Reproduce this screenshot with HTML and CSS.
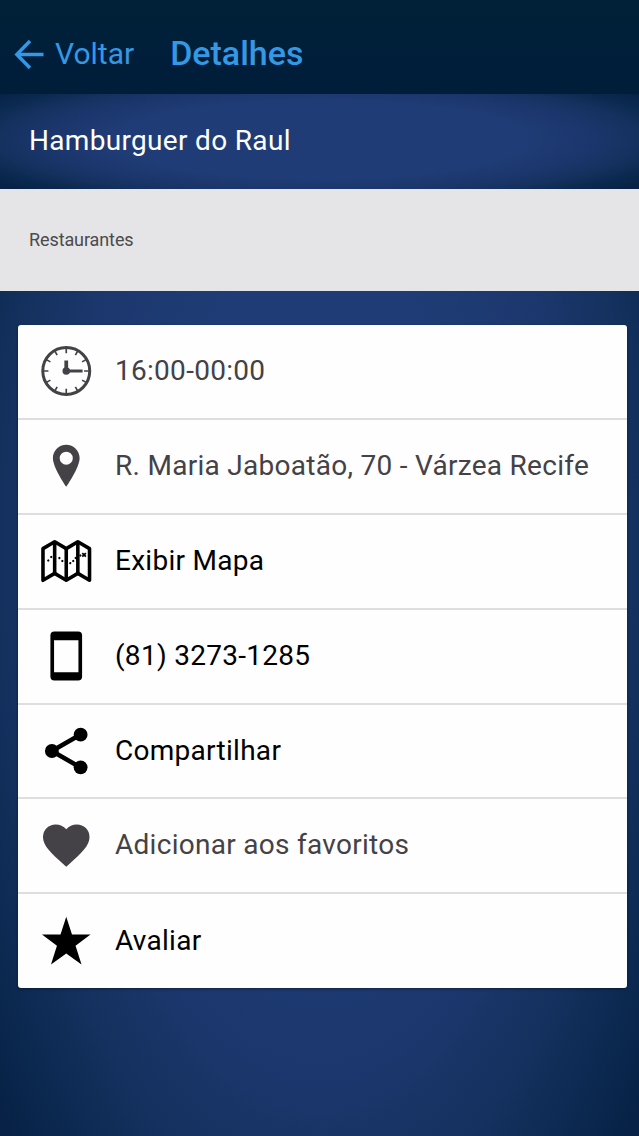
FILE: index.html
```html
<!DOCTYPE html>
<html lang="pt-BR">
<head>
    <meta charset="UTF-8">
    <meta name="viewport" content="width=device-width, initial-scale=1.0">
    <title>Detalhes</title>
    <link rel="stylesheet" href="styles.css">
</head>
<body>

<header class="navbar">
    <a class="back">
        <svg class="back-icon" viewBox="0 0 30 30"><path d="M29.500 15.500H3M16 2L2.800 15.500l13.200 13.500" fill="none" stroke="currentColor" stroke-width="3.4"/></svg>
        <span>Voltar</span>
    </a>
    <h1 class="title">Detalhes</h1>
</header>

<div class="place-name">Hamburguer do Raul</div>
<div class="category">Restaurantes</div>

<main class="content">
    <ul class="list">
        <li class="item muted">
            <svg class="icon" viewBox="0 0 52 52">
                <circle cx="26" cy="26" r="23.7" fill="none" stroke="currentColor" stroke-width="3"/>
                <path d="M26 3v5M26 44v5M3 26h5M44 26h5M14.5 6l2.3 4M35.2 42l2.3 4M6 14.5l4 2.3M42 35.2l4 2.3M37.5 6l-2.3 4M16.8 42l-2.3 4M46 14.5l-4 2.3M10 35.2l-4 2.3" stroke="currentColor" stroke-width="1.7"/>
                <path d="M26 15.500V26" stroke="currentColor" stroke-width="3.800"/>
                <path d="M26 26h16.500" stroke="currentColor" stroke-width="3.200"/>
                <circle cx="26" cy="26" r="3.800" fill="currentColor"/>
            </svg>
            <span>16:00-00:00</span>
        </li>
        <li class="item muted">
            <svg class="icon" viewBox="0 0 52 52">
                <path fill="currentColor" fill-rule="evenodd" d="M26 4.500C18.500 4.500 12.500 10.500 12.500 18c0 10 13.500 29 13.500 29s13.500-19 13.500-29c0-7.500-6-13.500-13.500-13.500zm0 7a6.600 6.600 0 1 1 0 13.200a6.600 6.600 0 0 1 0-13.200z"/>
            </svg>
            <span>R. Maria Jaboatão, 70 - Várzea Recife</span>
        </li>
        <li class="item">
            <svg class="icon" viewBox="0 0 52 52" fill="none" stroke="currentColor" stroke-linejoin="round">
                <path d="M2.500 13.500L14.300 6.500 26 13.500 37.700 6.500 49.500 13.500V45.500L37.700 38.500 26 45.500 14.300 38.500 2.500 45.500z" stroke-width="3.600"/>
                <path d="M14.300 6.500v32M26 13.500v32M37.700 6.500v32" stroke-width="3.600"/>
                <path d="M7.800 25.500l.1-.1M10.800 22l.1-.1M19 23l.1.1M22 26l.1.1M30 28.200l.1-.1M33 26l.1-.1M35.500 23l.1-.1M40.200 20.500l.1-.1" stroke-width="2.200" stroke-linecap="round"/>
                <path d="M42.200 18l3.600 3.600M45.800 18l-3.600 3.600" stroke-width="1.800"/>
            </svg>
            <span>Exibir Mapa</span>
        </li>
        <li class="item">
            <svg class="icon" viewBox="0 0 52 52">
                <path fill="currentColor" fill-rule="evenodd" d="M14 1.200h24a4 4 0 0 1 4 4v41.600a4 4 0 0 1-4 4H14a4 4 0 0 1-4-4V5.200a4 4 0 0 1 4-4zM13.700 10v32.500h24.600V10z"/>
            </svg>
            <span>(81) 3273-1285</span>
        </li>
        <li class="item">
            <svg class="icon" viewBox="0 0 52 52" fill="currentColor">
                <path d="M40.500 9.300L11.500 26l29 16.700" fill="none" stroke="currentColor" stroke-width="4.600"/>
                <circle cx="11.500" cy="26" r="7"/>
                <circle cx="40.500" cy="9.500" r="7"/>
                <circle cx="40.500" cy="42.500" r="7"/>
            </svg>
            <span>Compartilhar</span>
        </li>
        <li class="item muted">
            <svg class="icon" viewBox="0 0 52 52">
                <path fill="currentColor" d="M26 47L22.600 43.900C10.500 33 2.500 25.800 2.500 17A12.700 12.700 0 0 1 15.400 4.200C19.500 4.200 23.400 6.100 26 9.100c2.600-3 6.500-4.900 10.600-4.900A12.700 12.700 0 0 1 49.500 17c0 8.800-8 16-20.100 26.900z"/>
            </svg>
            <span>Adicionar aos favoritos</span>
        </li>
        <li class="item">
            <svg class="icon" viewBox="0 0 52 52">
                <path fill="currentColor" d="M26 1.500l5.800 18h18.700L35.400 30.800l6 19L26 38.500 10.600 49.800l6-19L1.500 19.500h18.700z"/>
            </svg>
            <span>Avaliar</span>
        </li>
    </ul>
</main>

</body>
</html>
```

FILE: styles.css
```css
* {
    margin: 0;
    padding: 0;
    box-sizing: border-box;
}

body {
    min-height: 1136px;
    display: flex;
    flex-direction: column;
    background-color: #0f2c5a;
    font-family: Roboto, sans-serif;
    font-size: 28px;
    letter-spacing: 0.28px;
    color: #000;
}

.navbar {
    height: 94px;
    padding: 13px 14px 0;
    display: flex;
    align-items: center;
    gap: 36px;
    background: linear-gradient(#002138, #001d3a);
    color: #3498e5;
    letter-spacing: 0;
}

.back {
    display: flex;
    align-items: center;
    gap: 11px;
    font-size: 30px;
}

.back span {
    padding-bottom: 1px;
}

.back-icon {
    width: 30px;
    height: 30px;
}

.title {
    padding-bottom: 1px;
    font-size: 34px;
    font-weight: 500;
}

.place-name {
    height: 95px;
    padding: 0 29px 3px;
    display: flex;
    align-items: center;
    background: radial-gradient(320px 60px at 50% 48%, #203c76 65%, #1b366c 85%, #15315f 100%, #0b2a51 112%, #072246 125%);
    color: #fff;
    letter-spacing: 0.32px;
}

.category {
    height: 102px;
    padding: 0 29px 1px;
    display: flex;
    align-items: center;
    background-color: #e5e4e6;
    color: #4b4a4c;
    font-size: 18px;
    letter-spacing: -0.1px;
}

.content {
    flex: 1;
    padding: 34px 12px 0 18px;
    background: radial-gradient(330px 700px at 50% 260px, #203c76 45%, #1b376d 75%, #15315f 95%, #0d2b54 108%, #072246 125%);
}

.list {
    list-style: none;
    overflow: hidden;
    border-radius: 3px;
    background-color: #fefefe;
    box-shadow: 0 1px 3px rgba(0, 0, 0, 0.4);
}

.item {
    height: 94.9px;
    padding: 0 22px;
    display: flex;
    align-items: center;
    gap: 23px;
    border-bottom: 2px solid #dedede;
}

.item span {
    padding-bottom: 2px;
}

.item:last-child {
    height: 93.6px;
    border-bottom: none;
}

.muted {
    color: #444246;
}

.icon {
    width: 52px;
    height: 52px;
    padding-left: 0.5px;
}
```
